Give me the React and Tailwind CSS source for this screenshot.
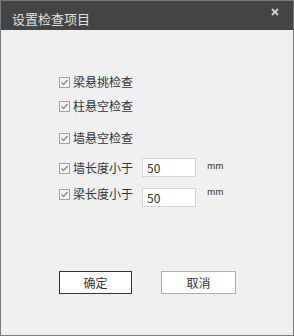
import React from 'react';

const font = { fontFamily: '"Noto Sans CJK SC", "Liberation Sans", sans-serif' };

function Check() {
  return (
    <span className="w-[11px] h-[11px] border border-[#a0a0a0] bg-[#f4f4f4] flex items-center justify-center shrink-0">
      <svg viewBox="0 0 9 9" className="w-[9px] h-[9px]" fill="none" stroke="#8a8a8a" strokeWidth="1.4">
        <path d="M1.5 4.5l2 2 4-4.5" />
      </svg>
    </span>
  );
}

function CheckRow({ label, className }) {
  return (
    <div className={`flex items-center h-[20px] gap-[3px] ${className}`}>
      <Check />
      <span className="text-[12px] text-[#333]">{label}</span>
    </div>
  );
}

function LengthRow({ label, value, className, inputTop }) {
  return (
    <div className={`flex items-start ${className}`}>
      <div className="flex items-center h-[20px] gap-[3px] w-[83px]">
        <Check />
        <span className="text-[12px] text-[#333]">{label}</span>
      </div>
      <div className={`w-[54px] h-[19px] border border-[#d4d4d4] bg-white text-[12px] text-[#333] leading-[17px] pl-[4px] ${inputTop}`}>
        {value}
      </div>
      <span className="ml-[11px] text-[9px] text-[#333] leading-none mt-[3px]">mm</span>
    </div>
  );
}

export default function App() {
  return (
    <div style={font} className="w-[294px] h-[336px] border border-[#7a7a7a] bg-[#f0f0f0] flex flex-col">
      {/* title bar */}
      <div className="h-[29px] bg-[#444] flex items-start justify-between pl-[11px] pr-[14px] shrink-0">
        <span className="text-[13px] text-[#e2e2e2] mt-[8px]">设置检查项目</span>
        <svg viewBox="0 0 8 8" className="w-[8px] h-[8px] mt-[7px]" stroke="#cfcfcf" strokeWidth="1.8">
          <path d="M1 1l6 6M7 1L1 7" />
        </svg>
      </div>

      {/* options */}
      <div className="flex flex-col pl-[58px]">
        <CheckRow label="梁悬挑检查" className="mt-[42px]" />
        <CheckRow label="柱悬空检查" className="mt-[4px]" />
        <CheckRow label="墙悬空检查" className="mt-[12px]" />
        <LengthRow label="墙长度小于" value="50" className="mt-[10px]" inputTop="mt-0" />
        <LengthRow label="梁长度小于" value="50" className="mt-[6px]" inputTop="mt-[4px]" />
      </div>

      {/* buttons */}
      <div className="flex pl-[58px] gap-[29px] mt-[64px]">
        <button className="w-[73px] h-[23px] border border-[#333] bg-white text-[12px] text-[#333]">确定</button>
        <button className="w-[75px] h-[23px] border border-[#adadad] bg-white text-[12px] text-[#333]">取消</button>
      </div>
    </div>
  );
}
